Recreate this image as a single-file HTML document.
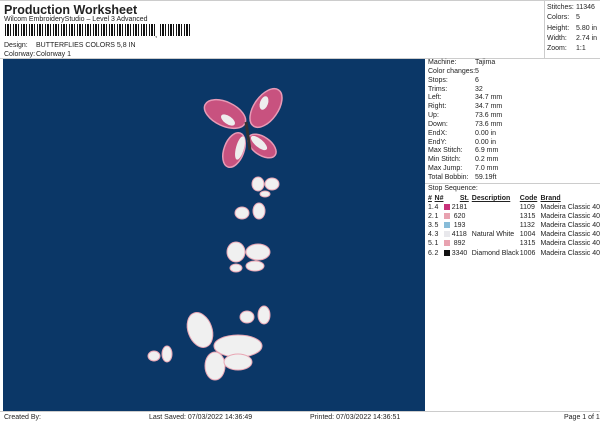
<!DOCTYPE html>
<html><head><style>
body{margin:0;width:600px;height:424px;background:#fff;font-family:"Liberation Sans",sans-serif;color:#222;position:relative;overflow:hidden}
.a{position:absolute;white-space:nowrap;font-size:7px;line-height:9px}
.t{font-size:12.5px;font-weight:bold;line-height:14px}
.bl{position:absolute;left:3px;top:59px;width:422px;height:352px;background:#0b3767}
.bc{position:absolute;left:5px;top:24px;height:12px;width:150px;background:repeating-linear-gradient(90deg,#111 0 1px,#fff 1px 2px,#111 2px 4px,#fff 4px 5px,#111 5px 6px,#fff 6px 8px)}
table{border-collapse:collapse}
td{padding:0;font-size:7px;line-height:9.1px;white-space:nowrap}
.sw{display:inline-block;width:6px;height:6px;vertical-align:-1px}
</style></head><body>
<div style="position:absolute;left:0;top:0;width:600px;height:1px;background:#ccc"></div>
<div class="a t" style="left:4px;top:3px">Production Worksheet</div>
<div class="a" style="left:4px;top:15px">Wilcom EmbroideryStudio – Level 3 Advanced</div>
<div class="bc"></div><div class="a" style="left:155px;top:30px;font-size:8px">,</div>
<div class="bc" style="left:160px;width:32px"></div>
<div class="a" style="left:4px;top:41px">Design:</div><div class="a" style="left:36px;top:41px">BUTTERFLIES COLORS 5,8 IN</div>
<div class="a" style="left:4px;top:50px">Colorway:</div><div class="a" style="left:36px;top:50px">Colorway 1</div>
<div style="position:absolute;left:544px;top:0;width:1px;height:58px;background:#ccc"></div>
<div style="position:absolute;left:0;top:58px;width:600px;height:1px;background:#ccc"></div>
<div class="a" style="left:547px;top:3px;line-height:10.3px">Stitches:<br>Colors:<br>Height:<br>Width:<br>Zoom:</div>
<div class="a" style="left:576px;top:3px;line-height:10.3px">11346<br>5<br>5.80 in<br>2.74 in<br>1:1</div>
<div class="bl"><svg width="422" height="352" viewBox="3 59 422 352">
<g fill="#c8527f" stroke="#e89ab6" stroke-width="1.5">
<ellipse cx="225" cy="114" rx="22" ry="12" transform="rotate(25 225 114)"/>
<ellipse cx="266" cy="108" rx="22" ry="12" transform="rotate(-55 266 108)"/>
<ellipse cx="234" cy="150" rx="10" ry="18" transform="rotate(20 234 150)"/>
<ellipse cx="262" cy="146" rx="16" ry="9" transform="rotate(35 262 146)"/>
</g>
<g fill="#eee">
<ellipse cx="228" cy="120" rx="8" ry="4" transform="rotate(35 228 120)"/>
<ellipse cx="264" cy="103" rx="4" ry="7" transform="rotate(20 264 103)"/>
<ellipse cx="240" cy="148" rx="4" ry="12" transform="rotate(15 240 148)"/>
<ellipse cx="259" cy="143" rx="10" ry="4" transform="rotate(40 259 143)"/>
</g>
<line x1="246" y1="122" x2="250" y2="150" stroke="#333" stroke-width="3"/>
<g fill="#f0f0f0" stroke="#e9a6b4" stroke-width="1">
<ellipse cx="258" cy="184" rx="6" ry="7"/><ellipse cx="272" cy="184" rx="7" ry="6"/><ellipse cx="265" cy="194" rx="5" ry="3"/>
<ellipse cx="242" cy="213" rx="7" ry="6"/><ellipse cx="259" cy="211" rx="6" ry="8"/>
<ellipse cx="236" cy="252" rx="9" ry="10"/><ellipse cx="258" cy="252" rx="12" ry="8"/><ellipse cx="236" cy="268" rx="6" ry="4"/><ellipse cx="255" cy="266" rx="9" ry="5"/>
<ellipse cx="247" cy="317" rx="7" ry="6"/><ellipse cx="264" cy="315" rx="6" ry="9"/>
<ellipse cx="200" cy="330" rx="12" ry="18" transform="rotate(-20 200 330)"/><ellipse cx="238" cy="346" rx="24" ry="11"/>
<ellipse cx="215" cy="366" rx="10" ry="14"/><ellipse cx="238" cy="362" rx="14" ry="8"/>
<ellipse cx="154" cy="356" rx="6" ry="5"/><ellipse cx="167" cy="354" rx="5" ry="8"/>
</g>
</svg></div>
<div style="position:absolute;left:0;top:411px;width:600px;height:1px;background:#ccc"></div>
<div class="a" style="left:4px;top:413px">Created By:</div>
<div class="a" style="left:149px;top:413px">Last Saved: 07/03/2022 14:36:49</div>
<div class="a" style="left:310px;top:413px">Printed: 07/03/2022 14:36:51</div>
<div class="a" style="left:564px;top:413px">Page 1 of 1</div>
<div class="a" style="left:428px;top:59px;line-height:8.85px">Machine:<br>Color changes:<br>Stops:<br>Trims:<br>Left:<br>Right:<br>Up:<br>Down:<br>EndX:<br>EndY:<br>Max Stitch:<br>Min Stitch:<br>Max Jump:<br>Total Bobbin:</div>
<div class="a" style="left:475px;top:59px;line-height:8.85px">Tajima<br>5<br>6<br>32<br>34.7 mm<br>34.7 mm<br>73.6 mm<br>73.6 mm<br>0.00 in<br>0.00 in<br>6.9 mm<br>0.2 mm<br>7.0 mm<br>59.19ft</div>
<div style="position:absolute;left:425px;top:183px;width:175px;height:1px;background:#ccc"></div>
<div class="a" style="left:428px;top:184px">Stop Sequence:</div>
<table style="position:absolute;left:428px;top:194px">
<tr style="font-weight:bold"><td style="width:8px"><u>#</u></td><td style="width:10px"><u>N#</u></td><td style="width:28px;text-align:right"><u>St.</u></td><td style="width:50px;padding-left:3px"><u>Description</u></td><td style="width:18px"><u>Code</u></td><td style="padding-left:3px"><u>Brand</u></td></tr>
<tr><td>1.</td><td>4</td><td><span class="sw" style="background:#c8327a"></span> 2181</td><td></td><td>1109</td><td style="padding-left:3px">Madeira Classic 40</td></tr>
<tr><td>2.</td><td>1</td><td><span class="sw" style="background:#e8a2b0"></span> &nbsp;620</td><td></td><td>1315</td><td style="padding-left:3px">Madeira Classic 40</td></tr>
<tr><td>3.</td><td>5</td><td><span class="sw" style="background:#88bcd8"></span> &nbsp;193</td><td></td><td>1132</td><td style="padding-left:3px">Madeira Classic 40</td></tr>
<tr><td>4.</td><td>3</td><td><span class="sw" style="background:#e8e8ec"></span> 4118</td><td style="padding-left:3px">Natural White</td><td>1004</td><td style="padding-left:3px">Madeira Classic 40</td></tr>
<tr><td>5.</td><td>1</td><td><span class="sw" style="background:#e8a2b0"></span> &nbsp;892</td><td></td><td>1315</td><td style="padding-left:3px">Madeira Classic 40</td></tr>
<tr><td>6.</td><td>2</td><td><span class="sw" style="background:#111"></span> 3340</td><td style="padding-left:3px">Diamond Black</td><td>1006</td><td style="padding-left:3px">Madeira Classic 40</td></tr>
</table>
</body></html>
